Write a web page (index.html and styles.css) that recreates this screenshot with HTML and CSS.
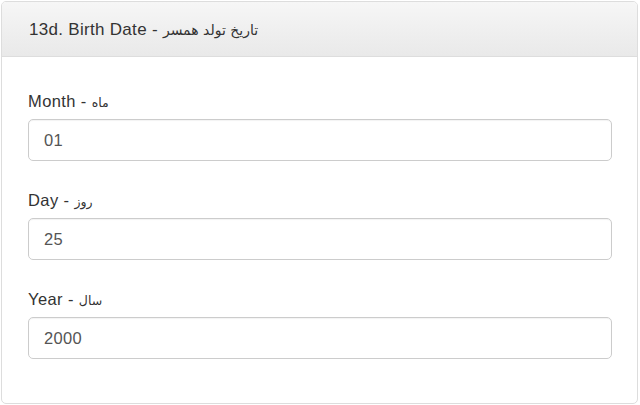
FILE: index.html
```html
<!DOCTYPE html>
<html>
<head>
<meta charset="utf-8">
<link rel="stylesheet" href="styles.css">
</head>
<body>
<div class="panel">
  <div class="panel-heading">13d. Birth Date - <span class="fa">تاریخ تولد همسر</span></div>
  <div class="panel-body">
    <div class="group">
      <label class="label">Month - <span class="fa">ماه</span></label>
      <div class="input">01</div>
    </div>
    <div class="group">
      <label class="label">Day - <span class="fa">روز</span></label>
      <div class="input">25</div>
    </div>
    <div class="group">
      <label class="label">Year - <span class="fa">سال</span></label>
      <div class="input">2000</div>
    </div>
  </div>
</div>
</body>
</html>
```
FILE: styles.css
```css
html, body {
  margin: 0;
  padding: 0;
  background: #fff;
}
body {
  padding: 1px 2px 1px 1px;
  font-family: "Liberation Sans", Arial, sans-serif;
  color: #333;
}
.panel {
  border: 1px solid #dddddd;
  border-radius: 5px;
  height: 403px;
  box-sizing: border-box;
  overflow: hidden;
}
.panel-heading {
  height: 55px;
  box-sizing: border-box;
  border-bottom: 1px solid #dddddd;
  background: linear-gradient(to bottom, #f6f6f6, #e9e9e9);
  padding: 1px 27px 0;
  display: flex;
  align-items: center;
  white-space: pre;
  font-size: 17px;
  letter-spacing: 0.3px;
  color: #333;
}
.fa {
  font-family: "DejaVu Sans", "Noto Sans", sans-serif;
  font-size: 14px;
  letter-spacing: 0;
  line-height: 1;
}
.panel-body {
  padding: 33px 25px 0 26px;
}
.group {
  margin-bottom: 28px;
}
.label {
  display: block;
  height: 22px;
  font-size: 16.5px;
  letter-spacing: 0.4px;
  line-height: 22px;
  margin-bottom: 7px;
  color: #333;
}
.label .fa {
  font-size: 12.5px;
}
.input {
  height: 42px;
  box-sizing: border-box;
  border: 1px solid #cccccc;
  border-radius: 5px;
  padding: 0 15px;
  display: flex;
  align-items: center;
  font-size: 16.5px;
  letter-spacing: 0.3px;
  color: #555;
  box-shadow: inset 0 1px 1px rgba(0,0,0,0.05);
}
```
